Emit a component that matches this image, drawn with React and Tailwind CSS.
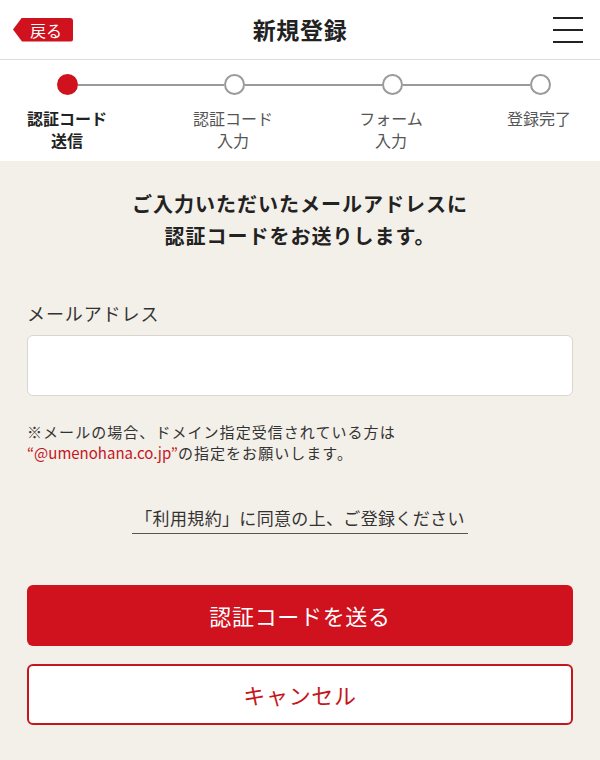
const steps = [
  { id: 1, lines: ["認証コード", "送信"], active: true },
  { id: 2, lines: ["認証コード", "入力"] },
  { id: 3, lines: ["フォーム", "入力"] },
  { id: 4, lines: ["登録完了"] },
]

function StepCircle({ active }) {
  return active ? (
    <div className="w-[21px] h-[21px] rounded-full bg-[#d0111e] shrink-0" />
  ) : (
    <div className="w-[21px] h-[21px] rounded-full bg-white border-2 border-[#9a9a9a] shrink-0" />
  )
}

function Header() {
  return (
    <header className="h-[60px] bg-white border-b border-[#dcdcdc] flex items-center px-[13px]">
      <div className="flex-1">
        <button className="h-[24px] w-[60px] bg-[#d0111e] text-white text-[16px] leading-none flex items-center justify-center pl-[6px] rounded-r-[3px] [clip-path:polygon(9px_0,100%_0,100%_100%,9px_100%,0_50%)]">
          戻る
        </button>
      </div>
      <h1 className="text-[23px] font-bold text-[#222] tracking-[0.03em]">新規登録</h1>
      <div className="flex-1 flex justify-end">
        <div className="w-[30px] flex flex-col gap-[10px] mr-[4px]">
          <span className="block h-[2px] bg-[#222]" />
          <span className="block h-[2px] bg-[#222]" />
          <span className="block h-[2px] bg-[#222]" />
        </div>
      </div>
    </header>
  )
}

function Stepper() {
  return (
    <section className="bg-white pt-[14px] pb-[10px]">
      <div className="flex items-center pl-[57px]">
        <StepCircle active />
        <div className="h-[2px] w-[146px] bg-[#9a9a9a]" />
        <StepCircle />
        <div className="h-[2px] w-[137px] bg-[#9a9a9a]" />
        <StepCircle />
        <div className="h-[2px] w-[127px] bg-[#9a9a9a]" />
        <StepCircle />
      </div>
      <div className="flex mt-[12px] pl-[22px]">
        {steps.map((s, i) => (
          <div
            key={s.id}
            className={
              "w-[90px] text-center text-[16px] leading-[22px] " +
              (s.active ? "font-bold text-[#222]" : "text-[#555]") +
              (i === 1 ? " ml-[76px]" : "") +
              (i === 2 ? " ml-[68px]" : "") +
              (i === 3 ? " ml-[58px]" : "")
            }
          >
            {s.lines.map((l) => (
              <div key={l}>{l}</div>
            ))}
          </div>
        ))}
      </div>
    </section>
  )
}

export default function App() {
  return (
    <div
      className="w-[600px] min-h-[760px] bg-[#f3efe9]"
      style={{ fontFamily: '"Noto Sans CJK JP", "Noto Sans", sans-serif' }}
    >
      <Header />
      <Stepper />

      <main className="px-[27px] pt-[27px] pb-[35px]">
        <p className="text-center text-[20px] font-bold leading-[32px] tracking-[0.05em] text-[#222]">
          ご入力いただいたメールアドレスに
          <br />
          認証コードをお送りします。
        </p>

        <label className="block mt-[48px] text-[18px] leading-[26px] tracking-[0.05em] text-[#333]">
          メールアドレス
        </label>
        <input
          type="email"
          className="mt-[9px] block w-full h-[61px] bg-white border border-[#d9d5d0] rounded-[6px]"
        />

        <p className="mt-[25px] text-[15px] leading-[21px] tracking-[0.07em] text-[#333]">
          ※メールの場合、ドメイン指定受信されている方は
          <br />
          <span className="text-[#c5161d] tracking-normal">“@umenohana.co.jp”</span>の指定をお願いします。
        </p>

        <div className="flex justify-center mt-[43px]">
          <a className="text-[17px] leading-[24px] text-[#333] border-b-[1.5px] border-[#555] pb-[3px] px-[3px] tracking-[0.02em]">
            「利用規約」に同意の上、ご登録ください
          </a>
        </div>

        <button className="mt-[51px] w-full h-[61px] bg-[#d0111e] text-white text-[22px] rounded-[6px] tracking-[0.03em]">
          認証コードを送る
        </button>
        <button className="mt-[18px] w-full h-[61px] bg-white border-2 border-[#c5161d] text-[#c5161d] text-[22px] rounded-[6px] tracking-[0.03em]">
          キャンセル
        </button>
      </main>
    </div>
  )
}
